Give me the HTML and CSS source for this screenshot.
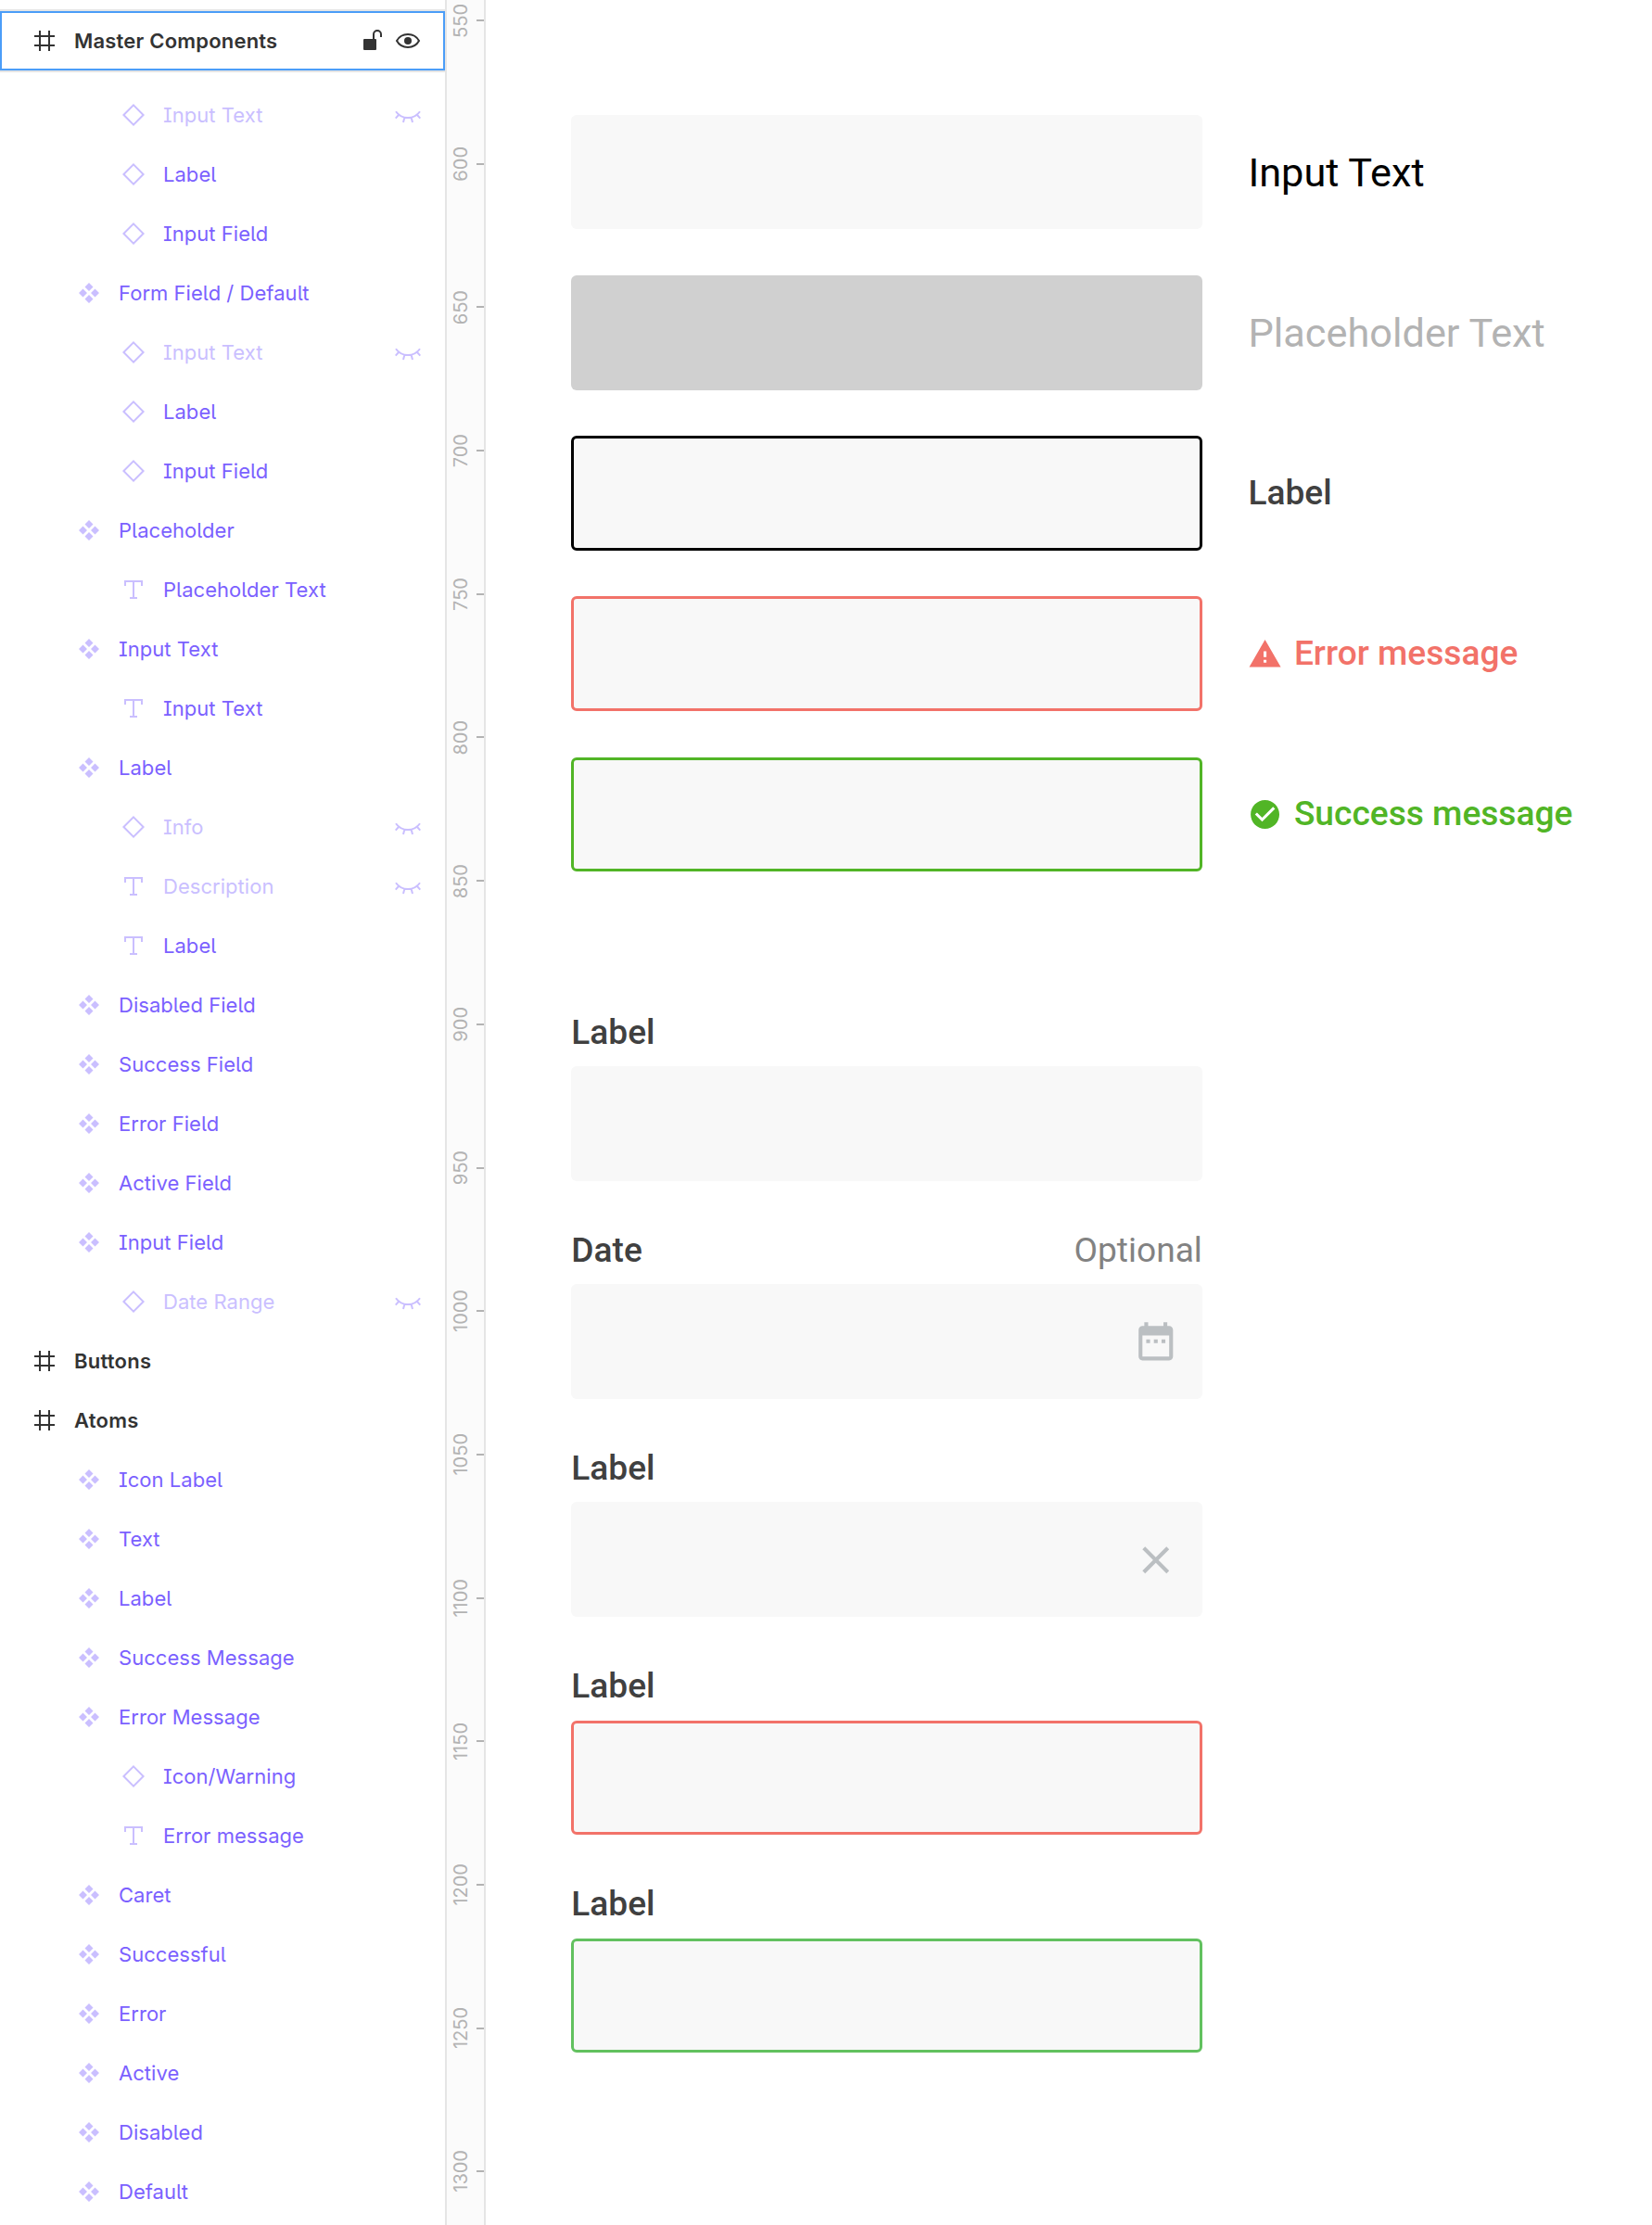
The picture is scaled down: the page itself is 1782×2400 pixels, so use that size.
FILE: index.html
```html
<!DOCTYPE html>
<html lang="en">
<head>
<meta charset="utf-8">
<title>Master Components</title>
<link rel="stylesheet" href="styles.css">
</head>
<body>
<svg class="sprite" aria-hidden="true">
  <symbol id="frame" viewBox="0 0 24 24"><path d="M7 1v22M17 1v22M1 7h22M1 17h22" fill="none" stroke="currentColor" stroke-width="2"/></symbol>
  <symbol id="component" viewBox="0 0 24 24"><path d="M12 1l4.5 4.5L12 10 7.500 5.500zM12 14l4.500 4.500L12 23l-4.500-4.500zM5.500 7.500L10 12l-4.500 4.500L1 12zM18.500 7.500L23 12l-4.500 4.500L14 12z" fill="currentColor"/></symbol>
  <symbol id="instance" viewBox="0 0 24 24"><path d="M12 1.400L22.600 12 12 22.600 1.400 12z" fill="none" stroke="currentColor" stroke-width="2"/></symbol>
  <symbol id="type" viewBox="0 0 24 24"><path d="M3 8V3h18v5M12 3v18M8 21h8" fill="none" stroke="currentColor" stroke-width="2"/></symbol>
  <symbol id="hidden" viewBox="0 0 28 24"><path d="M1 8.300c3 4.300 8 6.700 13 6.700s10-2.400 13-6.700M4 12l-3.300 3.600M24 12l3.300 3.600M10.300 15L9 20M17.700 15L19 20" fill="none" stroke="currentColor" stroke-width="2"/></symbol>
  <symbol id="eye" viewBox="0 0 28 24"><path d="M2 12C4.500 7.500 9 5 14 5s9.500 2.500 12 7c-2.500 4.500-7 7-12 7S4.500 16.500 2 12z" fill="none" stroke="currentColor" stroke-width="2"/><circle cx="14" cy="12" r="4" fill="currentColor"/></symbol>
  <symbol id="unlock" viewBox="0 0 24 24"><rect x="2" y="10" width="14" height="12" rx="1" fill="currentColor"/><path d="M13 10V5.000a4 4 0 0 1 8 0V8" fill="none" stroke="currentColor" stroke-width="2"/></symbol>
  <symbol id="warning" viewBox="0 0 24 24"><path d="M1 21h22L12 2 1 21zm12-3h-2v-2h2v2zm0-4h-2v-4h2v4z" fill="currentColor"/></symbol>
  <symbol id="check" viewBox="0 0 24 24"><path d="M12 2C6.480 2 2 6.480 2 12s4.480 10 10 10 10-4.480 10-10S17.520 2 12 2zm-2 15l-5-5 1.410-1.410L10 14.170l7.590-7.590L19 8l-9 9z" fill="currentColor"/></symbol>
  <symbol id="date" viewBox="0 0 24 24"><path d="M9 11H7v2h2v-2zm4 0h-2v2h2v-2zm4 0h-2v2h2v-2zm2-7h-1V2h-2v2H8V2H6v2H5c-1.110 0-1.990.9-1.990 2L3 20c0 1.100.89 2 2 2h14c1.100 0 2-.9 2-2V6c0-1.100-.9-2-2-2zm0 16H5V9h14v11z" fill="currentColor"/></symbol>
  <symbol id="close" viewBox="0 0 24 24"><path d="M19 6.410L17.590 5 12 10.590 6.410 5 5 6.410 10.590 12 5 17.590 6.410 19 12 13.410 17.590 19 19 17.590 13.410 12z" fill="currentColor"/></symbol>
</svg>
<div class="app">
  <aside class="layers">
    <header class="selected">
      <div class="selected-row">
        <svg class="icon"><use href="#frame"/></svg><span class="name">Master Components</span>
        <svg class="icon lock"><use href="#unlock"/></svg><svg class="icon-wide"><use href="#eye"/></svg>
      </div>
    </header>
    <ul class="tree">
      <li class="row child off"><svg class="icon"><use href="#instance"/></svg><span class="name">Input Text</span><svg class="icon-wide"><use href="#hidden"/></svg></li>
      <li class="row child"><svg class="icon"><use href="#instance"/></svg><span class="name">Label</span></li>
      <li class="row child"><svg class="icon"><use href="#instance"/></svg><span class="name">Input Field</span></li>
      <li class="row"><svg class="icon"><use href="#component"/></svg><span class="name">Form Field / Default</span></li>
      <li class="row child off"><svg class="icon"><use href="#instance"/></svg><span class="name">Input Text</span><svg class="icon-wide"><use href="#hidden"/></svg></li>
      <li class="row child"><svg class="icon"><use href="#instance"/></svg><span class="name">Label</span></li>
      <li class="row child"><svg class="icon"><use href="#instance"/></svg><span class="name">Input Field</span></li>
      <li class="row"><svg class="icon"><use href="#component"/></svg><span class="name">Placeholder</span></li>
      <li class="row child"><svg class="icon"><use href="#type"/></svg><span class="name">Placeholder Text</span></li>
      <li class="row"><svg class="icon"><use href="#component"/></svg><span class="name">Input Text</span></li>
      <li class="row child"><svg class="icon"><use href="#type"/></svg><span class="name">Input Text</span></li>
      <li class="row"><svg class="icon"><use href="#component"/></svg><span class="name">Label</span></li>
      <li class="row child off"><svg class="icon"><use href="#instance"/></svg><span class="name">Info</span><svg class="icon-wide"><use href="#hidden"/></svg></li>
      <li class="row child off"><svg class="icon"><use href="#type"/></svg><span class="name">Description</span><svg class="icon-wide"><use href="#hidden"/></svg></li>
      <li class="row child"><svg class="icon"><use href="#type"/></svg><span class="name">Label</span></li>
      <li class="row"><svg class="icon"><use href="#component"/></svg><span class="name">Disabled Field</span></li>
      <li class="row"><svg class="icon"><use href="#component"/></svg><span class="name">Success Field</span></li>
      <li class="row"><svg class="icon"><use href="#component"/></svg><span class="name">Error Field</span></li>
      <li class="row"><svg class="icon"><use href="#component"/></svg><span class="name">Active Field</span></li>
      <li class="row"><svg class="icon"><use href="#component"/></svg><span class="name">Input Field</span></li>
      <li class="row child off"><svg class="icon"><use href="#instance"/></svg><span class="name">Date Range</span><svg class="icon-wide"><use href="#hidden"/></svg></li>
      <li class="row frame"><svg class="icon"><use href="#frame"/></svg><span class="name">Buttons</span></li>
      <li class="row frame"><svg class="icon"><use href="#frame"/></svg><span class="name">Atoms</span></li>
      <li class="row"><svg class="icon"><use href="#component"/></svg><span class="name">Icon Label</span></li>
      <li class="row"><svg class="icon"><use href="#component"/></svg><span class="name">Text</span></li>
      <li class="row"><svg class="icon"><use href="#component"/></svg><span class="name">Label</span></li>
      <li class="row"><svg class="icon"><use href="#component"/></svg><span class="name">Success Message</span></li>
      <li class="row"><svg class="icon"><use href="#component"/></svg><span class="name">Error Message</span></li>
      <li class="row child"><svg class="icon"><use href="#instance"/></svg><span class="name">Icon/Warning</span></li>
      <li class="row child"><svg class="icon"><use href="#type"/></svg><span class="name">Error message</span></li>
      <li class="row"><svg class="icon"><use href="#component"/></svg><span class="name">Caret</span></li>
      <li class="row"><svg class="icon"><use href="#component"/></svg><span class="name">Successful</span></li>
      <li class="row"><svg class="icon"><use href="#component"/></svg><span class="name">Error</span></li>
      <li class="row"><svg class="icon"><use href="#component"/></svg><span class="name">Active</span></li>
      <li class="row"><svg class="icon"><use href="#component"/></svg><span class="name">Disabled</span></li>
      <li class="row"><svg class="icon"><use href="#component"/></svg><span class="name">Default</span></li>
    </ul>
  </aside>

  <div class="ruler">
    <div class="mark"><span>550</span></div>
    <div class="mark"><span>600</span></div>
    <div class="mark"><span>650</span></div>
    <div class="mark"><span>700</span></div>
    <div class="mark"><span>750</span></div>
    <div class="mark"><span>800</span></div>
    <div class="mark"><span>850</span></div>
    <div class="mark"><span>900</span></div>
    <div class="mark"><span>950</span></div>
    <div class="mark"><span>1000</span></div>
    <div class="mark"><span>1050</span></div>
    <div class="mark"><span>1100</span></div>
    <div class="mark"><span>1150</span></div>
    <div class="mark"><span>1200</span></div>
    <div class="mark"><span>1250</span></div>
    <div class="mark"><span>1300</span></div>
  </div>

  <main class="canvas">
    <section class="atoms">
      <div class="field"></div><div class="sample input-text">Input Text</div>
      <div class="field disabled"></div><div class="sample placeholder">Placeholder Text</div>
      <div class="field active"></div><div class="sample label">Label</div>
      <div class="field error"></div><div class="sample message-error"><svg class="status"><use href="#warning"/></svg><span>Error message</span></div>
      <div class="field success"></div><div class="sample message-success"><svg class="status"><use href="#check"/></svg><span>Success message</span></div>
    </section>
    <section class="forms">
      <div class="form-field"><div class="caption"><span class="label">Label</span></div><div class="field"></div></div>
      <div class="form-field"><div class="caption"><span class="label">Date</span><span class="optional">Optional</span></div><div class="field"><svg class="field-icon"><use href="#date"/></svg></div></div>
      <div class="form-field"><div class="caption"><span class="label">Label</span></div><div class="field"><svg class="field-icon"><use href="#close"/></svg></div></div>
      <div class="form-field"><div class="caption"><span class="label">Label</span></div><div class="field error"></div></div>
      <div class="form-field"><div class="caption"><span class="label">Label</span></div><div class="field valid"></div></div>
    </section>
  </main>
</div>
</body>
</html>
```
FILE: styles.css
```css
* { box-sizing: border-box; }

body {
  margin: 0;
  background: #fff;
  font-family: Roboto, sans-serif;
}

.sprite { display: none; }

.app {
  display: flex;
  height: 2400px;
  overflow: hidden;
}

/* Layers panel */
.layers {
  flex: none;
  width: 482px;
  padding-top: 10px;
  border-right: 2px solid #e5e5e5;
  color: #7b61ff;
  font-family: Inter, sans-serif;
  font-size: 22px;
  letter-spacing: 0.04px;
  font-feature-settings: "cv05", "cv08";
}

.selected {
  height: 68px;
  border: solid #e5e5e5;
  border-width: 2px 0;
  color: #333;
  font-weight: 600;
  letter-spacing: 0.2px;
}

.selected-row {
  display: flex;
  align-items: center;
  height: 64px;
  padding: 0 24px 0 34px;
  border: 2px solid #4b9df8;
}

.tree {
  margin: 14px 0 0;
  padding: 0;
  list-style: none;
}

.row {
  display: flex;
  align-items: center;
  height: 64px;
  padding: 0 26px 0 84px;
}

.row.child { padding-left: 132px; }
.row.frame {
  padding-left: 36px;
  color: #333;
  font-weight: 600;
  letter-spacing: 0.25px;
}
.row.off { color: #cabfff; }

.icon {
  flex: none;
  width: 24px;
  height: 24px;
}
.row .icon { color: #cabfff; }
.row.frame .icon { color: #333; }
.icon.lock { margin-right: 12px; }
.icon-wide {
  flex: none;
  width: 28px;
  height: 24px;
}
.name {
  flex: 1;
  margin-left: 20px;
}

/* Ruler */
.ruler {
  flex: none;
  width: 42px;
  border-right: 2px solid #e5e5e5;
  background: #fbfbfb;
  color: #b3b3b3;
  font-family: Inter, sans-serif;
  font-size: 20px;
}

.mark {
  display: flex;
  align-items: center;
  justify-content: space-between;
  height: 154.69px;
  padding-left: 3px;
}
.mark:first-child { margin-top: -55.340px; }
.mark span {
  writing-mode: vertical-rl;
  transform: rotate(180deg);
}
.mark::after {
  content: "";
  width: 8px;
  height: 2px;
  background: #b3b3b3;
}

/* Canvas */
.canvas {
  flex: 1;
  padding: 123.600px 0 0 92.300px;
}

.atoms {
  display: grid;
  grid-template-columns: 680.600px 1fr;
  grid-auto-rows: 123.750px;
  gap: 49.500px;
}

.field {
  display: flex;
  align-items: center;
  justify-content: flex-end;
  height: 123.750px;
  padding-right: 25.200px;
  border-radius: 6px;
  background: #f8f8f8;
}
.field.disabled { background: #d0d0d0; }
.field.active { border: 3px solid #000; }
.field.error { border: 3px solid #f27269; }
.field.success { border: 3px solid #51b526; }
.field.valid { border: 3px solid #62c15f; }

.field-icon {
  width: 49.500px;
  height: 49.500px;
  color: #bbbfc2;
}

.sample {
  display: flex;
  align-items: center;
  white-space: nowrap;
}
.input-text,
.placeholder {
  padding-top: 2px;
  font-size: 43.310px;
}
.input-text { color: #000; }
.placeholder { color: #b3b3b3; }

.label,
.message-error,
.message-success {
  font-size: 37.125px;
  font-weight: 500;
}
.label { color: #404040; }
.message-error { color: #f27269; }
.message-success { color: #51b526; }
.message-error span,
.message-success span { padding-bottom: 2px; }

.status {
  width: 37.125px;
  height: 37.125px;
  margin-right: 12.400px;
}

.forms {
  display: flex;
  flex-direction: column;
  gap: 49.375px;
  width: 680.600px;
  margin-top: 147.900px;
}

.caption {
  display: flex;
  align-items: center;
  justify-content: space-between;
  height: 50px;
  margin-bottom: 12px;
}
.optional {
  color: #828282;
  font-size: 37.125px;
}
```
